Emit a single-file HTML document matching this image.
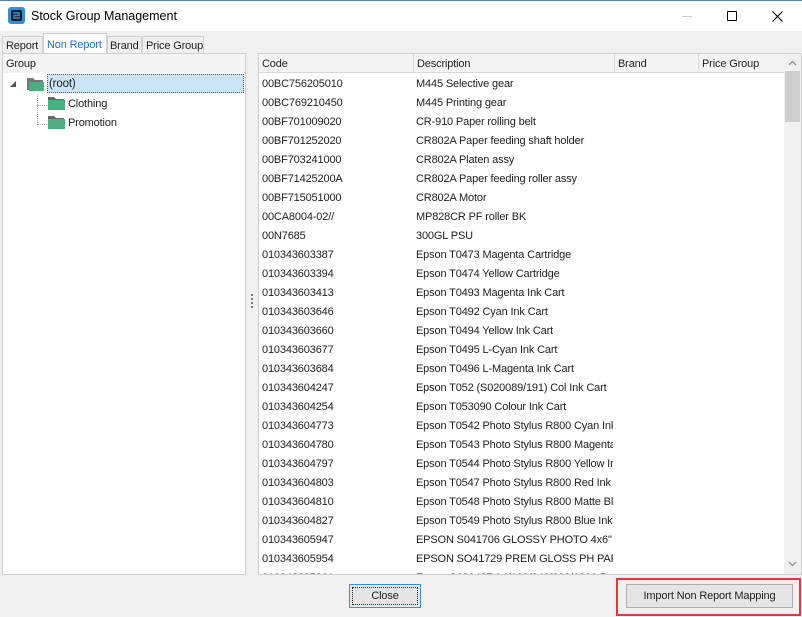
<!DOCTYPE html>
<html><head><style>
*{margin:0;padding:0;box-sizing:border-box}
body{width:802px;height:617px;background:#f0f0f0;font-family:"Liberation Sans",sans-serif;font-size:11px;color:#1e1e1e;position:relative;overflow:hidden;letter-spacing:-0.15px}
.abs{position:absolute}
.title{left:0;top:0;width:802px;height:31px;background:#fff;border-top:1px solid #5a7fa8}
.title span{position:absolute;left:31px;top:8px;font-size:12.5px;color:#000;letter-spacing:0}
.tab{top:36px;height:18px;font-size:11px;padding:3px 0 0 3px;border:1px solid #d0d0d0;border-bottom:none;background:#efefef;white-space:nowrap;overflow:hidden}
.panel{background:#fff;border:1px solid #cfcfcf}
.hdr{top:53px;height:19px;background:#f4f4f4;border-bottom:1px solid #d8d8d8;font-size:11px;padding:4px 0 0 3px}
.row{position:absolute;left:0;height:19px;width:524px;font-size:11px}
.row span{position:absolute;top:4px;white-space:nowrap;overflow:hidden}
.c1{left:3px;width:150px}.c2{left:157px;width:197px}
</style></head><body>
<div class="abs title">
<svg class="abs" style="left:8px;top:6px" width="17" height="17" viewBox="0 0 17 17"><rect x="0" y="0" width="17" height="17" rx="3" fill="#2f8fdc"/><rect x="3" y="3" width="11" height="11" rx="2" fill="#1a1a1a"/><path d="M5 6h6v2.5H6v2.5h6" stroke="#2f8fdc" stroke-width="1.5" fill="none"/></svg>
<span>Stock Group Management</span>
<div class="abs" style="left:682px;top:15px;width:10px;height:1px;background:#c8c8c8"></div>
<div class="abs" style="left:727px;top:10px;width:10px;height:10px;border:1px solid #000;border-radius:1px"></div>
<svg class="abs" style="left:772px;top:10px" width="11" height="11"><path d="M0.5 0.5L10.5 10.5M10.5 0.5L0.5 10.5" stroke="#000" stroke-width="1.1"/></svg>
</div>
<div class="abs tab" style="left:2px;width:41px">Report</div>
<div class="abs tab" style="left:43px;top:33px;height:21px;width:64px;background:#fff;color:#1a73d9;padding-top:5px">Non Report</div>
<div class="abs tab" style="left:107px;width:35px;padding-left:2px">Brand</div>
<div class="abs tab" style="left:142px;width:62px">Price Group</div>

<div class="abs panel" style="left:2px;top:53px;width:244px;height:522px">
<div class="abs" style="left:0;top:0;width:242px;height:19px;background:#f4f4f4;padding:4px 0 0 3px">Group</div>
<div class="abs" style="left:44px;top:20px;width:197px;height:19px;background:#cce4f7;border:1px dotted #555"></div>
<svg class="abs" style="left:6px;top:26px" width="8" height="8"><path d="M7 1L7 7L1 7Z" fill="#555"/></svg>
<div class="abs" style="left:34px;top:40px;height:31px;border-left:1px dotted #aaa"></div>
<div class="abs" style="left:34px;top:51px;width:10px;border-top:1px dotted #aaa"></div>
<div class="abs" style="left:34px;top:70px;width:10px;border-top:1px dotted #aaa"></div>
<svg class="abs" style="left:24px;top:23px" width="17" height="14"><path d="M0 1h6l2 2h8v10H0z" fill="#777"/><rect x="2" y="5" width="15" height="9" fill="#4caf7f"/></svg>
<div class="abs" style="left:46px;top:24px;font-size:11.5px">(root)</div>
<svg class="abs" style="left:45px;top:42px" width="17" height="14"><path d="M0 1h6l2 2h8v10H0z" fill="#666"/><rect x="0" y="4" width="17" height="10" fill="#4caf7f"/></svg>
<div class="abs" style="left:65px;top:44px">Clothing</div>
<svg class="abs" style="left:45px;top:61px" width="17" height="14"><path d="M0 1h6l2 2h8v10H0z" fill="#666"/><rect x="0" y="4" width="17" height="10" fill="#4caf7f"/></svg>
<div class="abs" style="left:65px;top:63px">Promotion</div>
</div>
<div class="abs" style="left:251px;top:294px;width:2px;height:14px;background:repeating-linear-gradient(#777 0 2px,transparent 2px 4px)"></div>

<div class="abs panel" style="left:258px;top:53px;width:544px;height:522px;overflow:hidden">
<div class="abs hdr" style="left:0;top:0;width:155px;border-right:1px solid #d8d8d8">Code</div>
<div class="abs hdr" style="left:155px;top:0;width:201px;border-right:1px solid #d8d8d8">Description</div>
<div class="abs hdr" style="left:356px;top:0;width:84px;border-right:1px solid #d8d8d8">Brand</div>
<div class="abs hdr" style="left:440px;top:0;width:85px">Price Group</div>
<div class="abs" style="left:525px;top:0;width:17px;height:520px;background:#f0f0f0">
<svg class="abs" style="left:4px;top:6px" width="9" height="6"><path d="M1 5L4.5 1.5L8 5" stroke="#888" fill="none" stroke-width="1.2"/></svg>
<div class="abs" style="left:1px;top:17px;width:15px;height:51px;background:#cdcdcd"></div>
<svg class="abs" style="left:4px;top:507px" width="9" height="6"><path d="M1 1L4.5 4.5L8 1" stroke="#888" fill="none" stroke-width="1.2"/></svg>
</div>
<div class="abs" style="left:0;top:19px;width:525px;height:502px">
<div class="row" style="top:1px"><span class="c1">00BC756205010</span><span class="c2">M445 Selective gear</span></div>
<div class="row" style="top:20px"><span class="c1">00BC769210450</span><span class="c2">M445 Printing gear</span></div>
<div class="row" style="top:39px"><span class="c1">00BF701009020</span><span class="c2">CR-910 Paper rolling belt</span></div>
<div class="row" style="top:58px"><span class="c1">00BF701252020</span><span class="c2">CR802A Paper feeding shaft holder</span></div>
<div class="row" style="top:77px"><span class="c1">00BF703241000</span><span class="c2">CR802A Platen assy</span></div>
<div class="row" style="top:96px"><span class="c1">00BF71425200A</span><span class="c2">CR802A Paper feeding roller assy</span></div>
<div class="row" style="top:115px"><span class="c1">00BF715051000</span><span class="c2">CR802A Motor</span></div>
<div class="row" style="top:134px"><span class="c1">00CA8004-02//</span><span class="c2">MP828CR PF roller BK</span></div>
<div class="row" style="top:153px"><span class="c1">00N7685</span><span class="c2">300GL PSU</span></div>
<div class="row" style="top:172px"><span class="c1">010343603387</span><span class="c2">Epson T0473 Magenta Cartridge</span></div>
<div class="row" style="top:191px"><span class="c1">010343603394</span><span class="c2">Epson T0474 Yellow Cartridge</span></div>
<div class="row" style="top:210px"><span class="c1">010343603413</span><span class="c2">Epson T0493 Magenta Ink Cart</span></div>
<div class="row" style="top:229px"><span class="c1">010343603646</span><span class="c2">Epson T0492 Cyan Ink Cart</span></div>
<div class="row" style="top:248px"><span class="c1">010343603660</span><span class="c2">Epson T0494 Yellow Ink Cart</span></div>
<div class="row" style="top:267px"><span class="c1">010343603677</span><span class="c2">Epson T0495 L-Cyan Ink Cart</span></div>
<div class="row" style="top:286px"><span class="c1">010343603684</span><span class="c2">Epson T0496 L-Magenta Ink Cart</span></div>
<div class="row" style="top:305px"><span class="c1">010343604247</span><span class="c2">Epson T052 (S020089/191) Col Ink Cart</span></div>
<div class="row" style="top:324px"><span class="c1">010343604254</span><span class="c2">Epson T053090 Colour Ink Cart</span></div>
<div class="row" style="top:343px"><span class="c1">010343604773</span><span class="c2">Epson T0542 Photo Stylus R800 Cyan Ink</span></div>
<div class="row" style="top:362px"><span class="c1">010343604780</span><span class="c2">Epson T0543 Photo Stylus R800 Magenta</span></div>
<div class="row" style="top:381px"><span class="c1">010343604797</span><span class="c2">Epson T0544 Photo Stylus R800 Yellow Ink</span></div>
<div class="row" style="top:400px"><span class="c1">010343604803</span><span class="c2">Epson T0547 Photo Stylus R800 Red Ink</span></div>
<div class="row" style="top:419px"><span class="c1">010343604810</span><span class="c2">Epson T0548 Photo Stylus R800 Matte Blk</span></div>
<div class="row" style="top:438px"><span class="c1">010343604827</span><span class="c2">Epson T0549 Photo Stylus R800 Blue Ink</span></div>
<div class="row" style="top:457px"><span class="c1">010343605947</span><span class="c2">EPSON S041706 GLOSSY PHOTO 4x6"</span></div>
<div class="row" style="top:476px"><span class="c1">010343605954</span><span class="c2">EPSON SO41729 PREM GLOSS PH PAPER</span></div>
<div class="row" style="top:495px"><span class="c1">010343605961</span><span class="c2">Epson S020407 A4/100/240/360/1200 Pa</span></div>
</div>
</div>

<div class="abs" style="left:349px;top:584px;width:72px;height:24px;border:1px solid #3b8fe0;background:#e5e5e5;padding:2px">
<div style="border:1px dotted #222;height:18px;text-align:center;padding-top:2px">Close</div></div>
<div class="abs" style="left:616px;top:578px;width:185px;height:38px;border:2px solid #e8343c"></div>
<div class="abs" style="left:626px;top:584px;width:167px;height:24px;border:1px solid #adadad;background:#e5e5e5;text-align:center;padding-top:5px">Import Non Report Mapping</div>
</body></html>
